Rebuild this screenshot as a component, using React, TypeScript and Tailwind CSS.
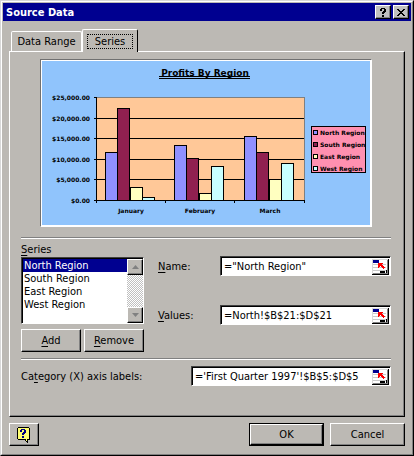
import { useState } from 'react'
import type { ReactNode } from 'react'

interface Series {
  name: string
  color: string
  tops: number[]
}

const SERIES: Series[] = [
  { name: 'North Region', color: '#9090ff', tops: [91, 84, 75] },
  { name: 'South Region', color: '#902050', tops: [47, 97, 91] },
  { name: 'East Region', color: '#ffffc0', tops: [126, 132, 118] },
  { name: 'West Region', color: '#c8ffff', tops: [136, 105, 102] },
]

const MONTHS = [
  { label: 'January', barX: 63, center: 89 },
  { label: 'February', barX: 132, center: 158 },
  { label: 'March', barX: 202, center: 228 },
]

const TICKS = [
  { label: '$25,000.00', y: 36 },
  { label: '$20,000.00', y: 57 },
  { label: '$15,000.00', y: 77 },
  { label: '$10,000.00', y: 98 },
  { label: '$5,000.00', y: 118 },
  { label: '$0.00', y: 139 },
]

const raised =
  'border border-t-white border-l-white border-r-black border-b-black shadow-[inset_-1px_-1px_#808080]'

function Key({ children }: { children: ReactNode }) {
  return <span className="underline underline-offset-2">{children}</span>
}

function Rule() {
  return <div className="h-[2px] border-t border-t-[#808080] border-b border-b-white" />
}

function ProfitsChart() {
  return (
    <svg
      viewBox="0 0 328 164"
      className="block w-full bg-[#90c4fc]"
      fontFamily="'DejaVu Sans', sans-serif"
      fontWeight="bold"
      role="img"
      aria-label="Profits By Region"
      shapeRendering="crispEdges"
    >
      <text x="163" y="15" fontSize="9" textAnchor="middle">
        Profits By Region
      </text>
      <path d="M117 15.5H208M117 17.5H208" stroke="#000" />

      {/* Plot area */}
      <rect x="54.5" y="36.5" width="208" height="103" fill="#ffc898" stroke="#808080" />
      {TICKS.map((tick) => (
        <g key={tick.label}>
          <text x="48" y={tick.y + 3} fontSize="6" textAnchor="end">
            {tick.label}
          </text>
          {tick.y > 36 && <path d={`M52 ${tick.y + 0.5}H262`} stroke="#000" />}
        </g>
      ))}
      <path d="M52 36.5H55M54.5 36V142M123.5 139V142M192.5 139V142M262.5 139V142" stroke="#000" />

      {MONTHS.map((month, m) => (
        <g key={month.label}>
          {SERIES.map((s, i) => (
            <rect
              key={s.name}
              x={month.barX + i * 12.5 + (i % 2 ? 0 : 0.5)}
              y={s.tops[m] + 0.5}
              width="12"
              height={139 - s.tops[m]}
              fill={s.color}
              stroke="#000"
            />
          ))}
          <text x={month.center} y="152" fontSize="6" textAnchor="middle">
            {month.label}
          </text>
        </g>
      ))}

      {/* Legend */}
      <rect x="269.500" y="65.500" width="54" height="46" fill="#ff90b0" stroke="#000" />
      {SERIES.map((s, i) => (
        <g key={s.name}>
          <rect x="271" y={69 + i * 12} width="5" height="5" fill="#000" />
          <rect x="272" y={70 + i * 12} width="3" height="3" fill={s.color} />
          <text x="278" y={74 + i * 12} fontSize="6">
            {s.name}
          </text>
        </g>
      ))}
    </svg>
  )
}

function RangeIcon() {
  return (
    <svg viewBox="0 0 17 16" className="h-4 w-[17px]" shapeRendering="crispEdges">
      <rect width="17" height="16" fill="#d8d8d8" />
      <rect x="1" y="1" width="14" height="13" fill="#fff" />
      <path d="M1 5.5H14M1 8.5H14M1 11.5H14" stroke="#c8c8c8" />
      <rect x="1" y="1" width="6" height="3" fill="#000090" />
      <path d="M6 4h5v1h-1v1h1v1h1v1h1v1h-1v1h-1V9h-1V8H9V7H8v1H7v1H6z" fill="#f00" />
      <path d="M8 12h5v2H8zM14 11h1v3h-1z" fill="#000" />
      <path d="M1 14.500H16M15.500 1V15" stroke="#808080" />
      <path d="M0 15.500H17M16.500 0V16" stroke="#000" />
    </svg>
  )
}

function RangeField({ label, value, onChange, id }: {
  label: string
  value: string
  onChange: (value: string) => void
  id: string
}) {
  return (
    <div className="flex h-5 min-w-0 flex-1 border border-t-[#404040] border-r-white border-b-white border-l-[#404040] bg-white shadow-[inset_1px_1px_#000]">
      <input
        id={id}
        value={value}
        onChange={(e) => onChange(e.target.value)}
        className="min-w-0 flex-1 bg-transparent pl-[3px] outline-none"
      />
      <button type="button" aria-label={`Select range for ${label}`} className="mt-px mr-px">
        <RangeIcon />
      </button>
    </div>
  )
}

function ScrollBar() {
  return (
    <div className="mt-px flex w-4 flex-col justify-between bg-[repeating-conic-gradient(#c0c0c0_0_25%,#fff_0_50%)] bg-size-[2px_2px]">
      <button type="button" aria-label="Scroll up" className={`flex h-4 items-center justify-center bg-[#bcb9b4] ${raised}`}>
        <svg viewBox="0 0 7 4" className="h-1 w-[7px]"><path d="M0 4L3.500 0L7 4z" fill="#808080" /></svg>
      </button>
      <button type="button" aria-label="Scroll down" className={`flex h-4 items-center justify-center bg-[#bcb9b4] ${raised}`}>
        <svg viewBox="0 0 7 4" className="h-1 w-[7px]"><path d="M0 0L3.500 4L7 0z" fill="#808080" /></svg>
      </button>
    </div>
  )
}

export default function App() {
  const [series, setSeries] = useState('North Region')
  const [name, setName] = useState('="North Region"')
  const [values, setValues] = useState('=North!$B$21:$D$21')
  const [category, setCategory] = useState("='First Quarter 1997'!$B$5:$D$5")

  return (
    <main className="border border-t-[#d8d8d8] border-r-black border-b-black border-l-[#d8d8d8] bg-[#bcb9b4] font-['DejaVu_Sans_Condensed','DejaVu_Sans',sans-serif] text-[11px] leading-[13px] text-black">
      <div className="border border-t-white border-r-[#808080] border-b-[#808080] border-l-white p-px">
        {/* Title bar */}
        <header className="flex h-[18px] items-center bg-[#000090] pr-[2px] pl-[3px]">
          <h1 className="flex-1 text-[11px] font-bold text-white">Source Data</h1>
          <div className="flex gap-[2px]">
            <button type="button" aria-label="Help" className={`flex h-[14px] w-4 items-center justify-center bg-[#c0c0c0] ${raised}`}>
              <svg viewBox="0 0 8 9" className="h-[9px] w-2" shapeRendering="crispEdges">
                <path d="M1 1h1V0h4v1h1v3H6v1H5v1H3V4h1V3h1V1H3v2H1zM3 7h2v2H3z" />
              </svg>
            </button>
            <button type="button" aria-label="Close" className={`flex h-[14px] w-4 items-center justify-center bg-[#c0c0c0] ${raised}`}>
              <svg viewBox="0 0 8 7" className="h-[7px] w-2" shapeRendering="crispEdges">
                <path d="M0 0h2v1h1v1h2V1h1V0h2v1H7v1H6v1H5v1h1v1h1v1h1v1H6V6H5V5H3v1H2v1H0V6h1V5h1V4h1V3H2V2H1V1H0z" />
              </svg>
            </button>
          </div>
        </header>

        <div className="px-[6px] pt-2 pb-[7px]">
          {/* Tabs */}
          <div role="tablist" className="flex items-end pl-[2px]">
            <button type="button" role="tab" aria-selected="false" className="h-5 w-[71px] rounded-t-xs border border-b-0 border-white">
              Data Range
            </button>
            <button
              type="button"
              role="tab"
              aria-selected="true"
              className="relative -mb-px flex h-[23px] w-14 items-center justify-center rounded-t-xs border border-b-0 border-t-white border-r-black border-l-white bg-[#bcb9b4]"
            >
              <span className="border border-dotted border-black px-[7px]">Series</span>
            </button>
          </div>

          <section className="border border-t-white border-r-black border-b-black border-l-white px-[11px] pt-[7px] pb-[30px] shadow-[inset_-1px_-1px_#808080]">
            <div className="mr-[21px] ml-[19px] border border-t-[#707070] border-r-white border-b-white border-l-[#707070]">
              <div className="border border-white">
                <ProfitsChart />
              </div>
            </div>

            <div className="mt-[10px] mr-[2px]">
              <Rule />
              <div className="mt-1 flex">
                <div className="w-[123px]">
                  <label htmlFor="series"><Key>S</Key>eries</label>
                  <div className="mt-px flex h-[67px] border border-t-[#404040] border-r-white border-b-white border-l-[#404040] bg-white shadow-[inset_1px_1px_#000]">
                    <select
                      id="series"
                      size={4}
                      value={series}
                      onChange={(e) => setSeries(e.target.value)}
                      className="mt-px ml-px min-w-0 flex-1 appearance-none overflow-hidden outline-none"
                    >
                      {SERIES.map((s) => (
                        <option
                          key={s.name}
                          className="h-[13px] min-h-0 p-0 pl-px leading-[13px] checked:bg-[#000090] checked:bg-[linear-gradient(#000090,#000090)] checked:text-white!"
                        >
                          {s.name}
                        </option>
                      ))}
                    </select>
                    <ScrollBar />
                  </div>
                  <div className="mt-[5px] flex gap-[3px]">
                    <button type="button" className={`h-[23px] flex-1 ${raised}`}><Key>A</Key>dd</button>
                    <button type="button" className={`h-[23px] flex-1 ${raised}`}><Key>R</Key>emove</button>
                  </div>
                </div>

                <div className="ml-[14px] flex flex-1 flex-col gap-[29px] pt-[13px]">
                  <div className="flex items-center">
                    <label htmlFor="name" className="w-[62px]"><Key>N</Key>ame:</label>
                    <RangeField id="name" label="name" value={name} onChange={setName} />
                  </div>
                  <div className="flex items-center">
                    <label htmlFor="values" className="w-[62px]"><Key>V</Key>alues:</label>
                    <RangeField id="values" label="values" value={values} onChange={setValues} />
                  </div>
                </div>
              </div>

              <div className="mt-[6px]"><Rule /></div>
              <div className="mt-[6px] flex items-center">
                <label htmlFor="category" className="w-[170px]">Ca<Key>t</Key>egory (X) axis labels:</label>
                <RangeField id="category" label="category labels" value={category} onChange={setCategory} />
              </div>
            </div>
          </section>

          {/* Footer */}
          <footer className="mt-[6px] flex items-center">
            <button type="button" aria-label="Office Assistant" className={`flex h-[23px] w-[30px] items-center justify-center ${raised}`}>
              <svg viewBox="0 0 14 16" className="h-4 w-[14px]" shapeRendering="crispEdges">
                <path d="M1 0h11v1h1v12h-2v3h-1v-1H9v-1H8v-1H1v-1H0V1h1z" />
                <path d="M1 1h11v11h-2v2H9v-2H1z" fill="#ffff70" />
                <path d="M3 3h1V2h4v1h1v3H8v1H7v1H5V6h1V5h1V3H5v2H3zM5 9h2v2H5z" fill="#000080" />
              </svg>
            </button>
            <div className="ml-auto flex gap-[6px]">
              <button type="button" className="h-[23px] w-[75px] border border-black">
                <span className={`flex h-full items-center justify-center ${raised}`}>OK</span>
              </button>
              <button type="button" className={`h-[23px] w-[75px] ${raised}`}>Cancel</button>
            </div>
          </footer>
        </div>
      </div>
    </main>
  )
}
